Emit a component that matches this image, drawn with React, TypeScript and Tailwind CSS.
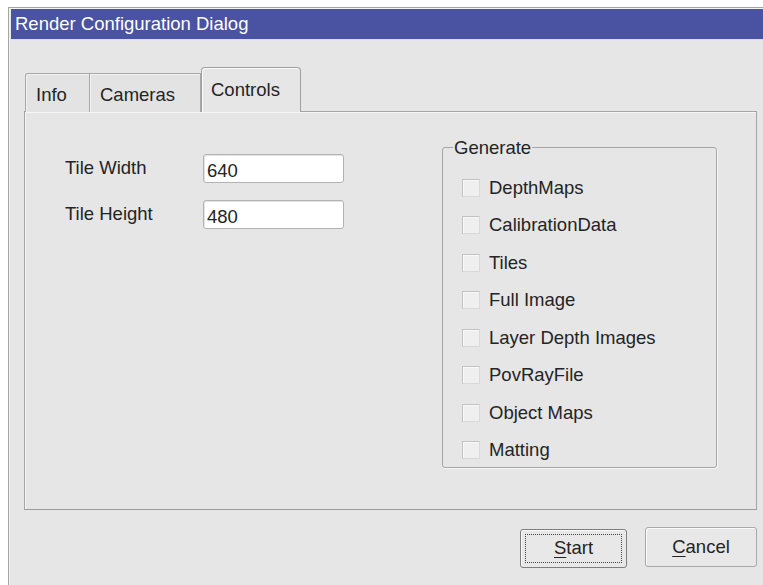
import React from "react";

const options = [
  "DepthMaps",
  "CalibrationData",
  "Tiles",
  "Full Image",
  "Layer Depth Images",
  "PovRayFile",
  "Object Maps",
  "Matting",
];

function Field({ label, value }: { label: string; value: string }) {
  return (
    <div className="flex items-center h-[29px]">
      <span className="w-[138px]">{label}</span>
      <div className="w-[141px] h-[29px] bg-white border border-[#b2b2b2] rounded-[3px] pl-[3px] pt-[7px] shadow-[inset_1px_1px_0_#e4e4e4]">
        {value}
      </div>
    </div>
  );
}

function Check({ label }: { label: string }) {
  return (
    <div className="flex items-center h-[37.5px]">
      <div className="w-[18px] h-[18px] border border-[#c2c2c2] border-r-[#d9d9d9] border-b-[#d9d9d9] bg-[#efefef] shadow-[inset_1px_1px_0_#f8f8f8]" />
      <span className="ml-[9px]">{label}</span>
    </div>
  );
}

export default function App() {
  return (
    <div className="w-[763px] h-[585px] overflow-hidden bg-white pt-[7px] pl-[8px] text-[18.5px] leading-none text-[#242424] [font-family:Liberation_Sans,Arial,sans-serif]">
      <div className="h-[578px] flex flex-col border-t border-l border-[#a4a4a4] shadow-[inset_1px_1px_0_#f4f4f4] bg-[#e6e6e6] pl-[2px] pt-[1px]">
        {/* title bar */}
        <div className="h-[31px] shrink-0 bg-[#4a52a2] text-white flex items-center pl-[4px] border-b border-[#d9dcea]">
          Render Configuration Dialog
        </div>

        <div className="flex-1 flex flex-col pl-[13px] pr-[6px] pt-[27px]">
          {/* tab strip */}
          <div className="flex items-end h-[45px] relative z-10 -mb-px">
            <div className="ml-[1px] w-[65px] h-[39px] border border-b-0 border-[#a8a8a8] rounded-tl-[3px] bg-[#e3e3e3] shadow-[inset_1px_1px_0_#f2f2f2] pl-[10px] pt-[12px]">
              Info
            </div>
            <div className="w-[111px] h-[39px] border border-l-0 border-b-0 border-[#a8a8a8] bg-[#e3e3e3] shadow-[inset_1px_1px_0_#f2f2f2] pl-[10px] pt-[12px]">
              Cameras
            </div>
            <div className="w-[100px] h-[45px] border border-b-0 border-[#a0a0a0] rounded-t-[4px] bg-[#e6e6e6] shadow-[inset_1px_1px_0_#fbfbfb] pl-[9px] pt-[13px]">
              Controls
            </div>
          </div>

          {/* tab page */}
          <div className="h-[399px] border border-[#a4a4a4] border-b-[#9c9c9c] shadow-[inset_1px_1px_0_#f6f6f6] flex">
            <div className="pl-[40px] pt-[42px] flex flex-col gap-[17px]">
              <Field label="Tile Width" value="640" />
              <Field label="Tile Height" value="480" />
            </div>

            <fieldset className="ml-auto mr-[39px] mt-[26px] w-[275px] h-[330px] border border-[#a6a6a6] rounded-[3px] shadow-[1px_1px_0_#f6f6f6] pl-[10px]">
              <legend className="px-[1px] leading-[19px]">Generate</legend>
              <div className="pl-[9px] pt-[12px] flex flex-col">
                {options.map((o) => (
                  <Check key={o} label={o} />
                ))}
              </div>
            </fieldset>
          </div>

          {/* dialog buttons */}
          <div className="flex justify-end items-start gap-[18px] pt-[17px]">
            <button className="mt-[2px] w-[107px] h-[39px] border border-[#7e7e7e] rounded-[3px] bg-[#e8e8e8] p-[4px] shadow-[inset_1px_1px_0_#fafafa]">
              <div className="w-full h-full border border-dotted border-[#444] flex items-center justify-center">
                <span>
                  <span className="underline underline-offset-[3px]">S</span>tart
                </span>
              </div>
            </button>
            <button className="w-[112px] h-[40px] border border-[#a8a8a8] rounded-[3px] bg-[#e8e8e8] shadow-[inset_1px_1px_0_#fafafa] flex items-center justify-center">
              <span>
                <span className="underline underline-offset-[3px]">C</span>ancel
              </span>
            </button>
          </div>
        </div>
      </div>
    </div>
  );
}
